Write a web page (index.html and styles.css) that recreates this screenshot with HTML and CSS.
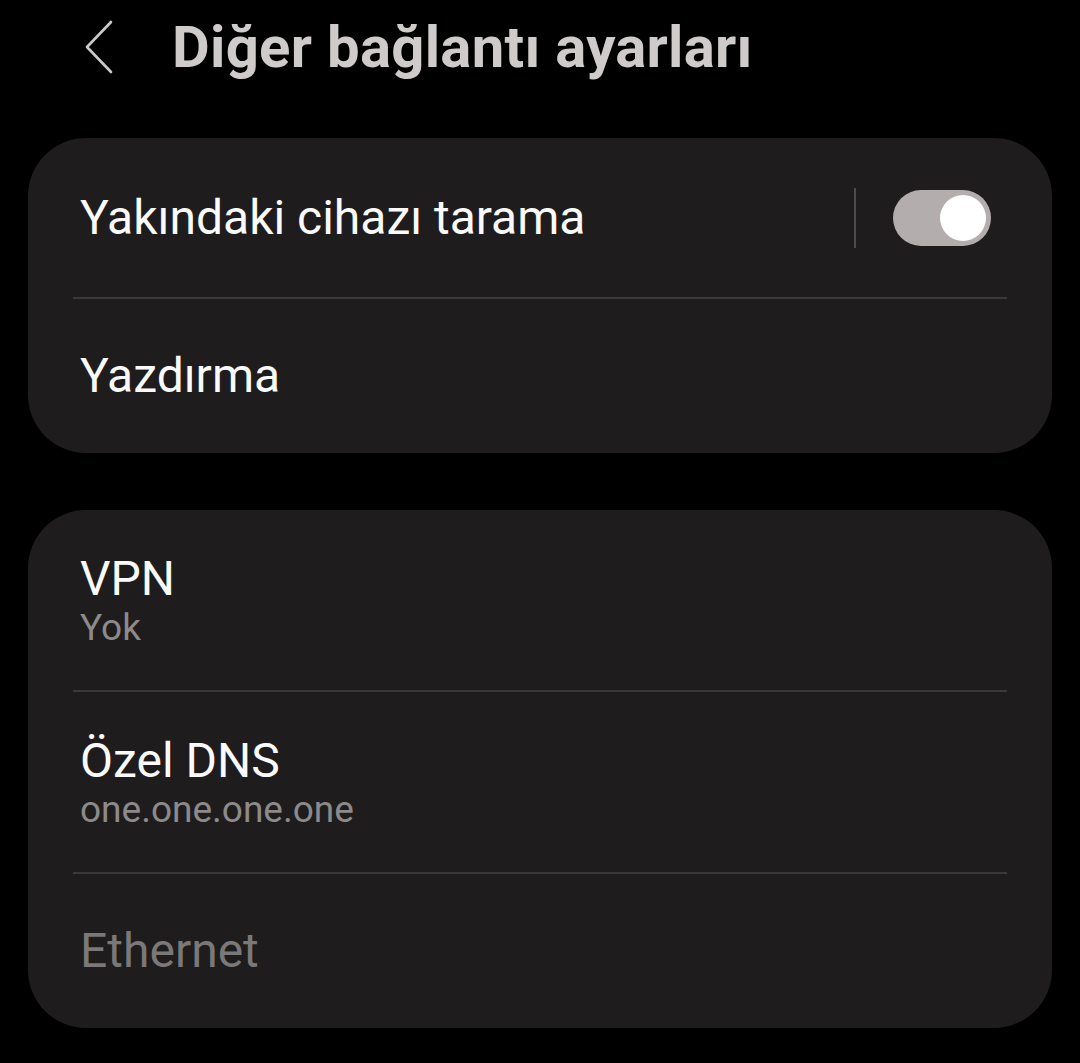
FILE: index.html
```html
<!DOCTYPE html>
<html lang="tr">
<head>
    <meta charset="UTF-8">
    <title>Diğer bağlantı ayarları</title>
    <link rel="stylesheet" href="styles.css">
</head>
<body>
    <header class="top-bar">
        <button class="back" type="button" aria-label="Geri">
            <svg width="30" height="54" viewBox="0 0 30 54">
                <path d="M27 2 L3 27 L27 52" fill="none" stroke="#cfcaca" stroke-width="2.6" stroke-linecap="round" stroke-linejoin="round"/>
            </svg>
        </button>
        <h1 class="title">Diğer bağlantı ayarları</h1>
    </header>

    <section class="card">
        <div class="row row-switch">
            <span class="row-title">Yakındaki cihazı tarama</span>
            <div class="switch-wrap">
                <span class="vsep"></span>
                <span class="switch on"><span class="knob"></span></span>
            </div>
        </div>
        <div class="divider"></div>
        <div class="row row-plain">
            <span class="row-title">Yazdırma</span>
        </div>
    </section>

    <section class="card">
        <div class="row row-sub">
            <span class="row-title">VPN</span>
            <span class="row-summary">Yok</span>
        </div>
        <div class="divider"></div>
        <div class="row row-sub">
            <span class="row-title">Özel DNS</span>
            <span class="row-summary">one.one.one.one</span>
        </div>
        <div class="divider"></div>
        <div class="row row-plain">
            <span class="row-title disabled">Ethernet</span>
        </div>
    </section>
</body>
</html>
```

FILE: styles.css
```css
body {
    margin: 0;
    background-color: #000;
    font-family: 'Roboto', 'Noto Sans', sans-serif;
    color: #fafafa;
}
.top-bar {
    display: flex;
    align-items: center;
    height: 94px;
    padding-left: 84px;
}
.back {
    background: none;
    border: none;
    padding: 0;
    width: 30px;
    height: 54px;
    margin-right: 58px;
    cursor: pointer;
}
.title {
    margin: 0;
    font-size: 58px;
    font-weight: 700;
    color: #d0cbcb;
    letter-spacing: 0.3px;
}
.card {
    background-color: #1e1c1d;
    margin: 44px 28px 0;
    border-radius: 58px;
    padding: 0 45px;
}
.card + .card {
    margin-top: 57px;
}
.row {
    display: flex;
    padding: 0 7px;
}
.row-switch {
    height: 159px;
    align-items: center;
    justify-content: space-between;
}
.row-plain {
    height: 154px;
    align-items: center;
}
.row-sub {
    height: 180px;
    flex-direction: column;
    justify-content: center;
}
.row-title {
    font-size: 48px;
    line-height: 56px;
    color: #fafafa;
}
.row-title.disabled {
    color: #7a7878;
}
.row-summary {
    font-size: 37px;
    line-height: 42px;
    color: #8c8a8a;
}
.divider {
    height: 2px;
    background-color: #3a3839;
}
.switch-wrap {
    display: flex;
    align-items: center;
}
.vsep {
    width: 2px;
    height: 60px;
    background-color: #4d4b4b;
    margin-right: 37px;
}
.switch {
    position: relative;
    width: 98px;
    height: 56px;
    border-radius: 28px;
    background-color: #b4adad;
    margin-right: 9px;
}
.knob {
    position: absolute;
    right: 5px;
    top: 5px;
    width: 46px;
    height: 46px;
    border-radius: 50%;
    background-color: #fff;
}
```
